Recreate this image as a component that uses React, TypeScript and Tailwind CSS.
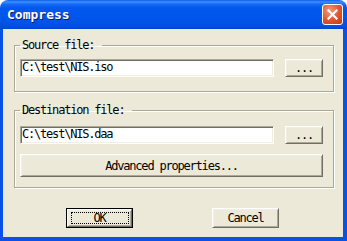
export default function App() {
  const raised =
    "bg-[#ECE9D8] border border-t-white border-l-white border-b-[#716F64] border-r-[#716F64] shadow-[inset_1px_1px_0_#F1EFE2,inset_-1px_-1px_0_#ACA899]"
  const sunken =
    "bg-white border border-t-[#ACA899] border-l-[#ACA899] border-b-white border-r-white shadow-[inset_1px_1px_0_#716F64,inset_-1px_-1px_0_#F1EFE2]"
  const group =
    "border border-[#ACA899] shadow-[inset_1px_1px_0_white,1px_1px_0_white] pl-[5px] pr-[10px]"

  return (
    <div className="w-[347px] h-[241px] bg-white flex flex-col font-['DejaVu_Sans_Mono',monospace] text-[12px] tracking-[-1.2px] text-black">
      {/* title bar */}
      <div className="h-[29px] rounded-t-[8px] bg-[linear-gradient(to_bottom,#0A5FEF_0px,#3D8FFB_2px,#1A6AF6_4px,#0058EE_8px,#0055E9_20px,#0050E0_26px,#0046CF_29px)] flex items-center pl-[7px] pr-[4px]">
        <span className="text-white font-bold text-[13px] tracking-[0px] [text-shadow:1px_1px_0_#0A1C6E]">
          Compress
        </span>
        <div className="ml-auto w-[21px] h-[21px] rounded-[3px] border border-white bg-[radial-gradient(circle_at_35%_30%,#F29A7A,#E0542E_55%,#C13A17)] flex items-center justify-center">
          <svg width="11" height="11" viewBox="0 0 11 11">
            <path d="M1.5 1.5 L9.5 9.5 M9.5 1.5 L1.5 9.5" stroke="white" strokeWidth="2.2" strokeLinecap="square" />
          </svg>
        </div>
      </div>

      {/* body */}
      <div className="flex-1 bg-[#ECE9D8] border-l-[3px] border-r-[4px] border-b-[4px] border-[#0A51E6] pl-[11px] pr-[9px] pt-[9px] flex flex-col">
        <fieldset className={`${group} pt-[6px] pb-[14px]`}>
          <legend className="px-[2px] leading-[15px]">Source file:&nbsp;</legend>
          <div className="flex gap-[11px]">
            <div className={`${sunken} flex-1 h-[18px] pl-[1px] leading-[15px]`}>C:\test\NIS.iso</div>
            <div className={`${raised} w-[38px] h-[18px] flex items-center justify-center leading-none`}>...</div>
          </div>
        </fieldset>

        <fieldset className={`${group} mt-[11px] pt-[8px] pb-[10px]`}>
          <legend className="px-[2px] leading-[15px]">Destination file:&nbsp;</legend>
          <div className="flex gap-[11px]">
            <div className={`${sunken} flex-1 h-[18px] pl-[1px] leading-[15px]`}>C:\test\NIS.daa</div>
            <div className={`${raised} w-[38px] h-[18px] flex items-center justify-center leading-none`}>...</div>
          </div>
          <div className={`${raised} mt-[10px] h-[23px] flex items-center justify-center`}>
            Advanced properties...
          </div>
        </fieldset>

        <div className="flex mt-[20px] ml-[52px] gap-[79px]">
          <div className="w-[67px] h-[20px] border border-black">
            <div className={`${raised} relative h-full flex items-center justify-center`}>
              OK
              <div className="absolute left-[3px] right-[2px] top-[2px] bottom-[2px] border border-dotted border-black" />
            </div>
          </div>
          <div className={`${raised} w-[67px] h-[20px] flex items-center justify-center`}>Cancel</div>
        </div>
      </div>
    </div>
  )
}
